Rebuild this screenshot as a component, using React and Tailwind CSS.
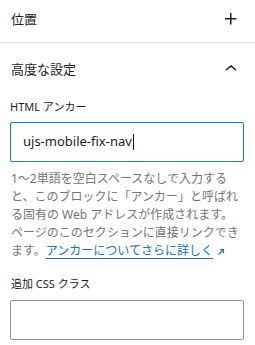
import React from "react";

const font = { fontFamily: '"Noto Sans", "Noto Sans CJK JP", sans-serif' };

function PlusIcon() {
  return (
    <svg width="24" height="24" viewBox="0 0 24 24" fill="#1e1e1e">
      <path d="M11 12.5V17.5H12.5V12.5H17.5V11H12.5V6H11V11H6V12.5H11Z" />
    </svg>
  );
}

function ChevronUp() {
  return (
    <svg width="24" height="24" viewBox="0 0 24 24" fill="#1e1e1e">
      <path d="M6.5 12.4L12 8l5.5 4.4-.9 1.2L12 10l-4.6 3.6-1-1.2z" />
    </svg>
  );
}

export default function App() {
  return (
    <div className="w-[255px] h-[345px] bg-white overflow-hidden text-[#1e1e1e]" style={font}>
      <div className="h-[43px] border-b border-[#e0e0e0]">
        <div className="flex items-center justify-between h-[37px] pl-[11px] pr-[12px]">
          <span className="text-[13px] leading-[16px]">位置</span>
          <PlusIcon />
        </div>
      </div>
      <div className="pl-[10px] pr-[11px]">
        <div className="mt-[14px] h-[24px] flex items-center justify-between pl-[1px] pr-[1px]">
          <span className="text-[13px] leading-[16px]">高度な設定</span>
          <ChevronUp />
        </div>
        <div className="mt-[18px] h-[16px] text-[11px] leading-[16px] font-normal">
          HTML アンカー
        </div>
        <div className="mt-[7px] h-[40px] border-[1.5px] border-[#1a7fc7] rounded-[2px] flex items-center pl-[12px] text-[13px]">
          <span>ujs-mobile-fix-nav</span>
          <span className="inline-block w-[1px] h-[16px] bg-[#1e1e1e] ml-[1px]"></span>
        </div>
        <p className="mt-[8px] text-[12px] leading-[18px] text-[#757575] pl-[1px] whitespace-nowrap">
          1〜2単語を空白スペースなしで入力する
          <br />
          と、このブロックに「アンカー」と呼ばれ
          <br />
          る固有の Web アドレスが作成されます。
          <br />
          ページのこのセクションに直接リンクでき
          <br />
          ます。
          <a className="text-[#2271b1] underline underline-offset-[3px]" href="#">
            アンカーについてさらに詳しく
          </a>
          <span className="inline-block ml-[4px] align-middle">
            <svg width="8" height="8" viewBox="0 0 8 8" fill="none" stroke="#2271b1" strokeWidth="1.2">
              <path d="M1.5 6.5L6.5 1.5M3 1.5h3.5V5" />
            </svg>
          </span>
        </p>
        <div className="mt-[16px] h-[16px] text-[11px] leading-[16px] font-normal pl-[1px]">
          追加 CSS クラス
        </div>
        <div className="mt-[8px] h-[40px] border border-[#949494] rounded-[2px]"></div>
      </div>
    </div>
  );
}
